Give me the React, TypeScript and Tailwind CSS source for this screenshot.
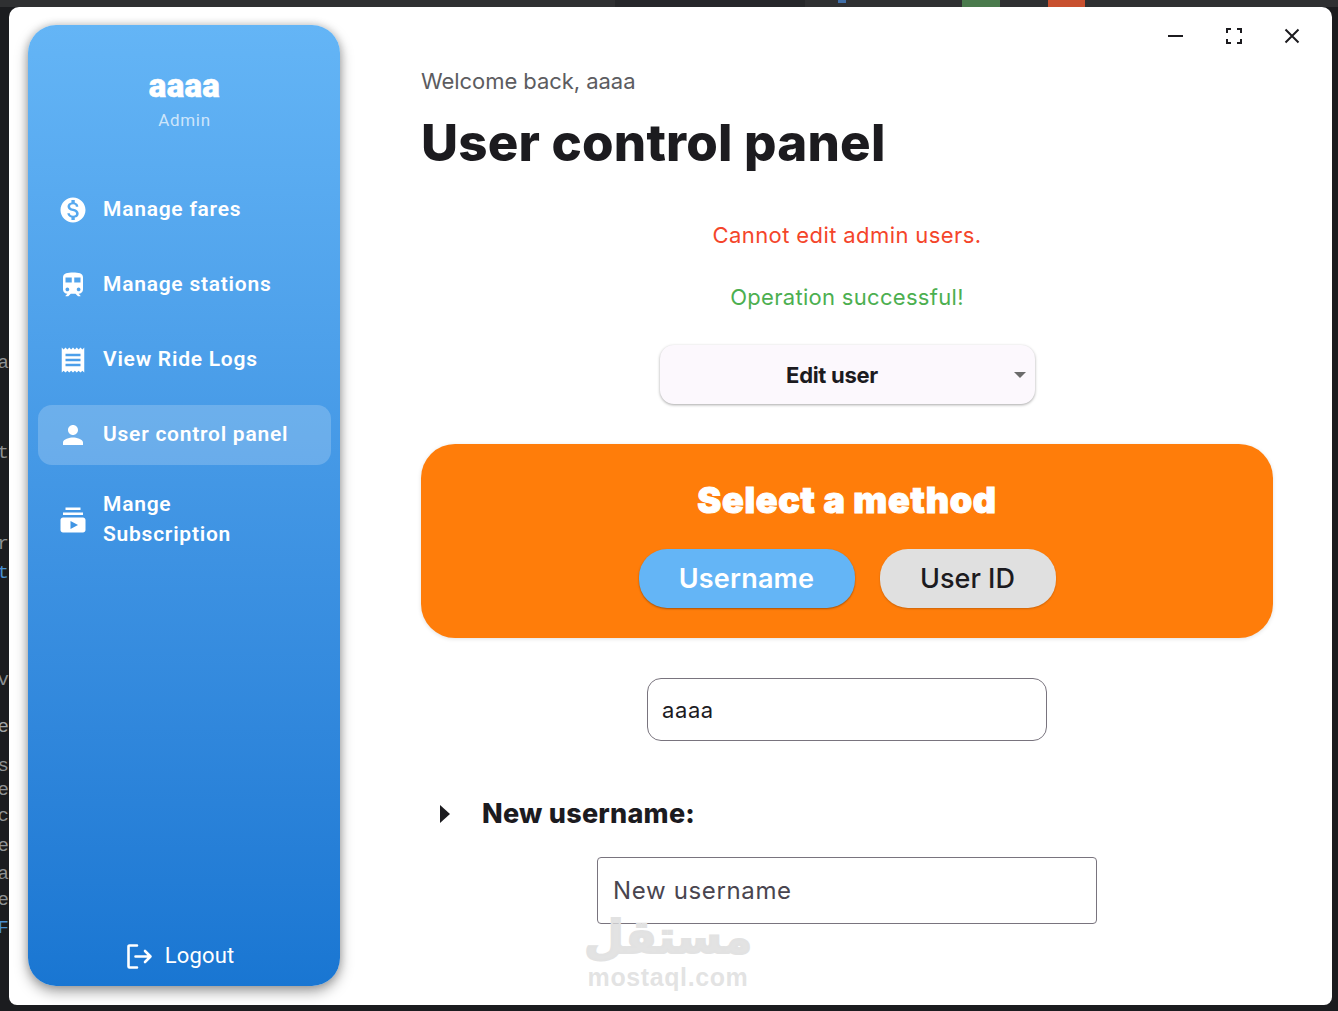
import React from "react";
import { MdMonetizationOn, MdTrain, MdReceipt, MdPerson, MdSubscriptions } from "react-icons/md";

const sans = "font-['Inter','Noto_Sans',sans-serif]";
const rubik = "font-['Roboto','Inter',sans-serif]";

function NavItem({ icon, label, active, last }: { icon: React.ReactNode; label: React.ReactNode; active?: boolean; last?: boolean }) {
  return (
    <div className={`flex items-center h-[60px] rounded-[14px] pl-[20px] ${last ? "mt-[25px]" : "mb-[15px]"} ${active ? "bg-white/20" : ""}`}>
      <span className="w-[30px] h-[30px] flex items-center justify-center text-white">{icon}</span>
      <span className={`ml-[15px] -mt-[2px] text-white text-[21px] leading-[30px] font-semibold tracking-[0.75px] ${rubik}`}>{label}</span>
    </div>
  );
}

function EdgeGlyphs() {
  const items = [
    ["a", 352, "#8f9193"], ["t", 442, "#8f9193"], ["r", 533, "#8f9193"], ["t", 562, "#4a8fd0"], ["v", 669, "#8f9193"], ["e", 716, "#a0a2a4"], ["s", 755, "#8f9193"], ["e", 779, "#8f9193"], ["c", 805, "#8f9193"], ["e", 835, "#8f9193"], ["a", 863, "#8f9193"], ["e", 889, "#8f9193"], ["F", 917, "#4a8fd0"],
  ] as const;
  return (
    <>
      {items.map(([c, y, col], i) => (
        <span key={i} style={{ top: y, color: col }} className="absolute right-[calc(100%-9px)] text-[19px] leading-[22px] font-['Liberation_Mono',monospace] whitespace-nowrap">{c}</span>
      ))}
    </>
  );
}

export default function App() {
  return (
    <div className="relative w-[1338px] h-[1011px] bg-[#1b1c1f] overflow-hidden">
      <EdgeGlyphs />
      <div className="absolute top-0 left-0 w-full h-[7px] bg-[#2f3032]" />
      <div className="absolute top-0 left-[615px] w-[190px] h-[7px] bg-[#26272a]" />
      <div className="absolute top-0 left-[838px] w-[8px] h-[3px] bg-[#3f6ea8]" />
      <div className="absolute top-0 left-[962px] w-[38px] h-[7px] bg-[#4a7a4c]" />
      <div className="absolute top-0 left-[1048px] w-[37px] h-[7px] bg-[#c8502f]" />

      <div className="absolute left-[9px] top-[7px] w-[1323px] h-[998px] bg-white rounded-tl-[10px] rounded-tr-[10px] rounded-bl-[8px] rounded-br-[8px] overflow-hidden flex items-stretch">
        {/* Sidebar */}
        <aside className="shrink-0 ml-[19px] mt-[18px] mb-[19px] w-[312px] rounded-[28px] bg-gradient-to-b from-[#64b5f6] to-[#1976d2] shadow-[0_6px_14px_rgba(0,0,0,0.35),0_0_8px_rgba(0,0,0,0.2)] flex flex-col pl-[10px] pr-[9px]">
          <div className="flex flex-col items-center pt-[41px]">
            <div className={`text-white text-[33px] leading-[40px] font-black tracking-[0.3px] [-webkit-text-stroke:0.5px_white] ${rubik}`}>aaaa</div>
            <div className={`text-white/70 text-[17px] leading-[22px] mt-[3px] tracking-[0.65px] ${rubik}`}>Admin</div>
          </div>
          <nav className="mt-[49px]">
            <NavItem icon={<MdMonetizationOn size={30} />} label="Manage fares" />
            <NavItem icon={<MdTrain size={30} />} label="Manage stations" />
            <NavItem icon={<MdReceipt size={30} />} label="View Ride Logs" />
            <NavItem icon={<MdPerson size={30} />} label="User control panel" active />
            <NavItem icon={<MdSubscriptions size={30} />} label={<>Mange<br />Subscription</>} last />
          </nav>
          <div className="mt-auto mb-[15px] flex items-center justify-center pr-[10px] text-white">
            <svg className="ml-[2px]" width="26" height="25" viewBox="0 0 26 25" fill="none" stroke="currentColor" strokeWidth="2.6" strokeLinecap="round" strokeLinejoin="round">
              <path d="M10 1.5H2.5a1 1 0 0 0-1 1v20a1 1 0 0 0 1 1H10" />
              <path d="M8.5 12.5h15M18 7l5.5 5.5L18 18" />
            </svg>
            <span className={`ml-[12px] text-[22px] leading-[30px] tracking-[0.15px] ${rubik}`}>Logout</span>
          </div>
        </aside>

        {/* Main */}
        <main className={`flex-1 min-w-0 pl-[81px] pr-[59px] flex flex-col ${sans}`}>
          <div className="pt-[59px] text-[#5c5c60] text-[22px] leading-[30px] tracking-[-0.05px]">Welcome back, aaaa</div>
          <h1 className="mt-[13px] text-[#1c1b1f] text-[51px] leading-[68px] font-extrabold tracking-[0.2px]">User control panel</h1>
          <div className="mt-[43px] text-center text-[#f4452a] text-[22px] leading-[30px] tracking-[0.4px]">Cannot edit admin users.</div>
          <div className="mt-[32px] text-center text-[#4caf50] text-[22px] leading-[30px] tracking-[0.3px]">Operation successful!</div>
          <div className="mt-[33px] self-center relative w-[375px] h-[59px] rounded-[14px] bg-[#fcf8fd] shadow-[0_1px_3px_rgba(0,0,0,0.35)] flex items-center justify-center pr-[30px] pt-[2px]">
            <span className="text-[#1c1b1f] text-[22px] font-bold tracking-[-0.3px]">Edit user</span>
            <span className="absolute right-[9px] top-[27px] w-0 h-0 border-x-[6px] border-x-transparent border-t-[6px] border-t-[#6b6b6b]" />
          </div>
          <section className="mt-[40px] h-[194px] shrink-0 rounded-[34px] bg-[#ff7d0a] shadow-[0_1px_4px_rgba(0,0,0,0.12)] flex flex-col items-center pt-[33px]">
            <div className={`text-white text-[36px] leading-[46px] font-black tracking-[0.65px] [-webkit-text-stroke:1px_white] ${sans}`}>Select a method</div>
            <div className="mt-[26px] flex gap-[25px]">
              <button className="w-[216px] h-[59px] pt-[1px] rounded-[28px] bg-[#64b5f6] text-white text-[27px] font-semibold tracking-[0.2px] shadow-[0_1px_2px_rgba(0,0,0,0.35)]">Username</button>
              <button className="w-[176px] h-[59px] pt-[1px] rounded-[28px] bg-[#e0e0e0] text-[#1c1b1f] text-[27px] font-medium shadow-[0_1px_2px_rgba(0,0,0,0.2)]">User ID</button>
            </div>
          </section>
          <div className="mt-[40px] self-center w-[400px] h-[63px] shrink-0 rounded-[14px] border border-[#79747e] flex items-center px-[14px] pt-[2px] text-[#1c1b1f] text-[22px] tracking-[0.6px]">aaaa</div>
          <div className="mt-[53px] flex items-center">
            <span className="ml-[19px] w-0 h-0 border-y-[9px] border-y-transparent border-l-[10px] border-l-[#1c1b1f]" />
            <span className="ml-[32px] text-[#1c1b1f] text-[27px] leading-[40px] font-extrabold tracking-[0.25px]">New username:</span>
          </div>
          <div className="mt-[23px] self-center w-[500px] h-[67px] rounded-[4px] border border-[#79747e] flex items-center px-[15px] text-[#49454f] text-[24px] tracking-[0.65px] shrink-0">New username</div>
        </main>

        {/* Window controls */}
        <div className="absolute top-[20px] right-[31px] flex items-center gap-[40px] text-[#1c1b1f]">
          <svg width="18" height="18" viewBox="0 0 18 18" fill="none" stroke="currentColor" strokeWidth="2"><path d="M1 9h15" /></svg>
          <svg width="18" height="18" viewBox="0 0 18 18" fill="none" stroke="currentColor" strokeWidth="2"><path d="M2 6V2h4M12 2h4v4M16 12v4h-4M6 16H2v-4" /></svg>
          <svg width="18" height="18" viewBox="0 0 18 18" fill="none" stroke="currentColor" strokeWidth="2"><path d="M2.5 2.5l13 13M15.5 2.5l-13 13" /></svg>
        </div>

        {/* Watermark */}
        <div className="absolute left-[578px] top-[903px] w-[162px] flex flex-col items-center text-[#dcdcdc]/80 pointer-events-none">
          <span className="text-[46px] leading-[54px] font-bold font-['DejaVu_Sans',sans-serif] [-webkit-text-stroke:2px_#e2e2e2]">مستقل</span>
          <span className="text-[25px] leading-[26px] font-bold tracking-[0.6px] font-['Liberation_Sans',sans-serif]">mostaql.com</span>
        </div>
      </div>
    </div>
  );
}
